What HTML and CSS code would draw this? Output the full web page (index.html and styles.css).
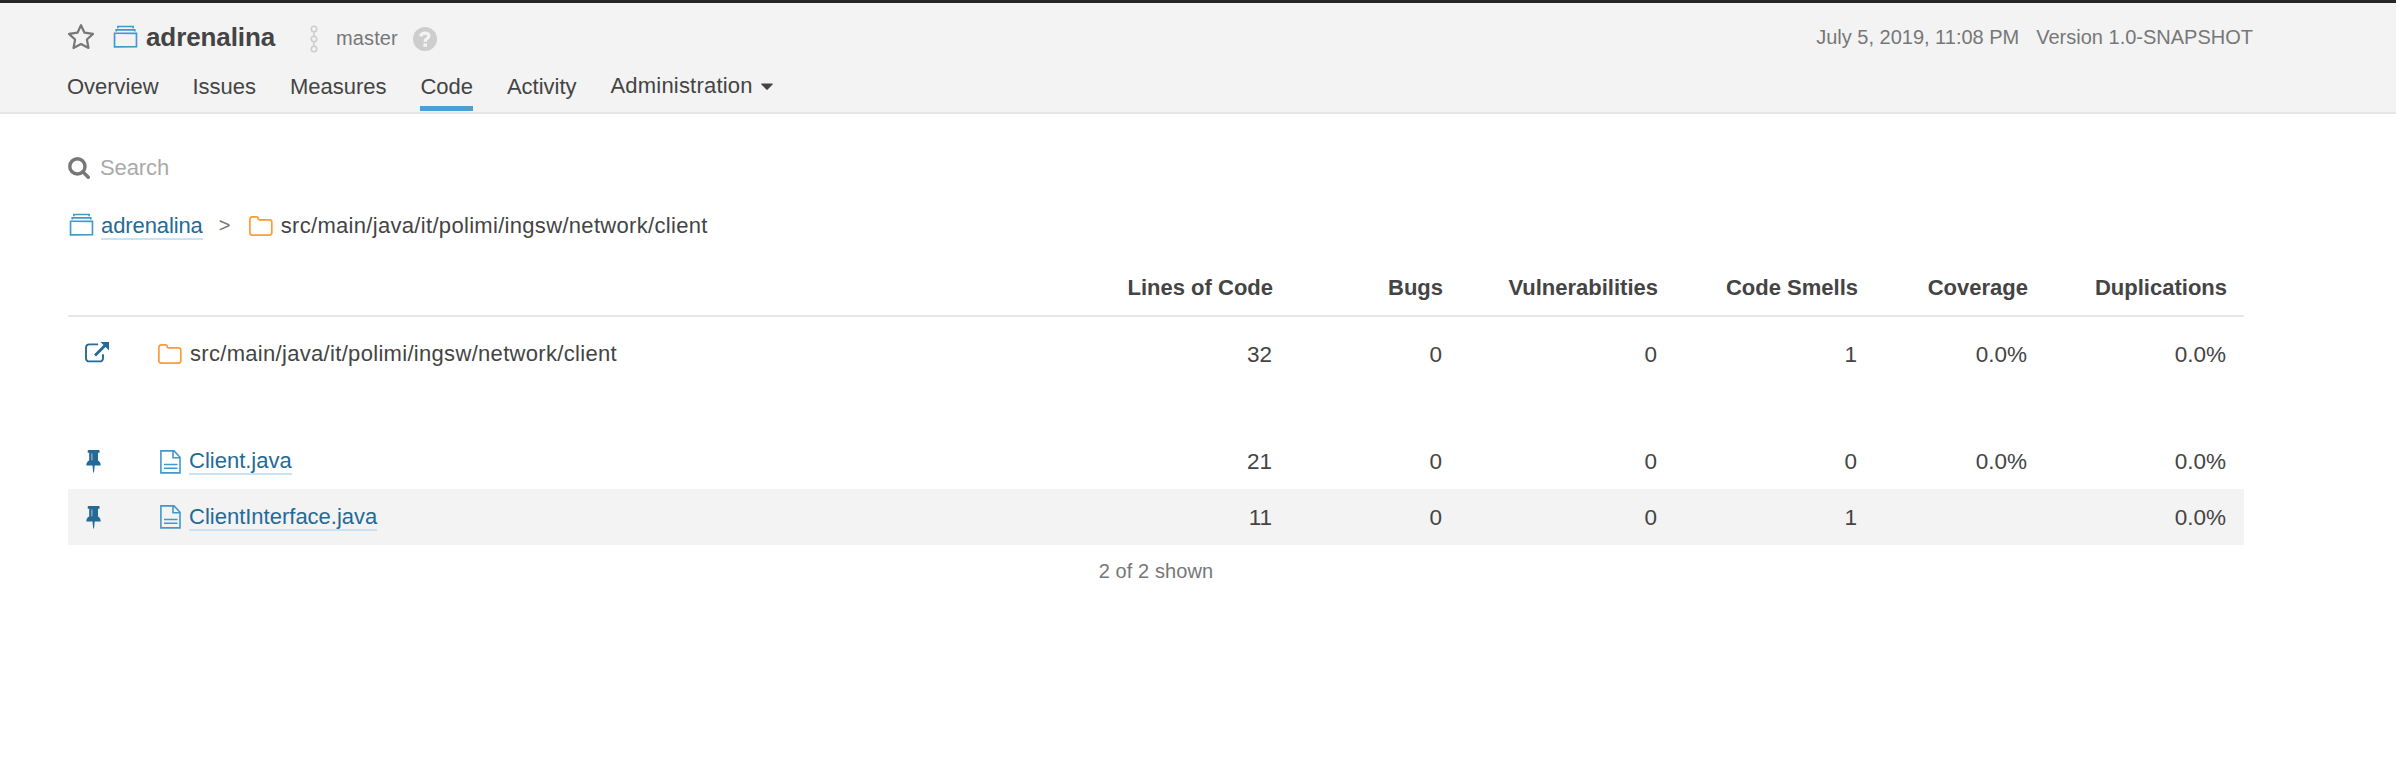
FILE: index.html
```html
<!DOCTYPE html>
<html lang="en">
<head>
<meta charset="utf-8">
<title>adrenalina - Code</title>
<link rel="stylesheet" href="styles.css">
</head>
<body>
<svg class="sprite" aria-hidden="true">
  <symbol id="project" viewBox="0 0 16 16"><path fill="#4398cb" d="M14.985 13.988L1 14.005 1.02 5h13.966v8.988h-.001zM1.998 5.995l.006 7.02L14.022 13 14 6.004l-12.002-.009zM3 4.5V4h9.996l.004.5h1l-.005-1.497-11.98.003L2 4.5h1zm1-2v-.504h8.002L12 2.5h.997l-.001-1.508H3.003L3 2.5h1z"/></symbol>
  <symbol id="folder" viewBox="0 0 24 20"><path fill="none" stroke="#fc9c35" stroke-width="1.7" d="M.9 3.4Q.9.9 3.400.9H7.300Q9.200.9 9.200 2.800 9.200 3.900 10.500 3.900H20.500Q22.800 3.900 22.800 6.200V16.800Q22.800 19.100 20.500 19.100H3.200Q.9 19.100.9 16.800Z"/></symbol>
  <symbol id="file" viewBox="0 0 21 24"><path fill="none" stroke="#4398cb" stroke-width="1.6" d="M.9.9H14L20 7.200V22.900H.9ZM13 .9V7.800H20M4 14.500H17.500M4 18.200H17.500"/></symbol>
  <symbol id="pin" viewBox="0 0 15 23"><path fill="#236a97" d="M2.500 0H12.800Q13.600 0 13.600.9V1.900Q13.600 2.800 12.800 2.800H12V10.600Q14.700 12 14.700 15.600H8.700L8 22.500H7.200L6.500 15.600H.3Q.3 12 3.200 10.600V2.800H2.500Q1.700 2.800 1.700 1.900V.9Q1.700 0 2.500 0Z"/><path stroke="#a9c7da" d="M5.900 3.500V10.300"/></symbol>
</svg>
<header class="header">
  <div class="title-row">
    <svg class="star" viewBox="0 0 28 27"><path d="M14 2.200L17.500 9.700 26 10.900 19.900 16.500 21.500 25 14 21 6.500 25 8.100 16.500 2 10.900 10.500 9.700Z"/></svg>
    <svg class="icon project-icon"><use href="#project"/></svg>
    <h1 class="name">adrenalina</h1>
    <svg class="branch-icon" viewBox="0 0 8 28"><circle cx="4" cy="4" r="2.700"/><circle cx="4" cy="14" r="2.700"/><circle cx="4" cy="24" r="2.700"/><path d="M4 6.700V11.300M4 16.700V21.300"/></svg>
    <span class="branch">master</span>
    <svg class="help" viewBox="0 0 24 24"><circle cx="12" cy="12" r="12" fill="#cdcdcd"/><path fill="none" stroke="#f3f3f3" stroke-width="3.300" d="M7.500 9.400Q8.700 6.100 12 6.100 16 6.200 16 9.100 16 10.700 13.900 11.800 12.200 12.700 12.200 14.800"/><path fill="#f3f3f3" d="M10.400 16.400H14V19.800H10.400Z"/></svg>
    <span class="meta date">July 5, 2019, 11:08 PM</span>
    <span class="meta version">Version 1.0-SNAPSHOT</span>
  </div>
  <nav class="nav">
    <a class="tab">Overview</a>
    <a class="tab">Issues</a>
    <a class="tab">Measures</a>
    <a class="tab active">Code</a>
    <a class="tab">Activity</a>
    <a class="tab admin">Administration<svg class="caret" viewBox="0 0 12 8"><path d="M.9.4H11.100Q12.300.6 11.600 1.500L6.700 6.600Q6 7.200 5.300 6.600L.4 1.500Q-.3.6.9.4Z"/></svg></a>
  </nav>
</header>
<main class="main">
  <div class="search">
    <svg class="search-icon" viewBox="0 0 23 23"><circle cx="9.400" cy="9.400" r="7.600"/><path d="M14.800 14.800L20.300 20.300"/></svg>
    <span>Search</span>
  </div>
  <div class="crumbs">
    <svg class="icon"><use href="#project"/></svg>
    <a class="link">adrenalina</a>
    <span class="sep">&gt;</span>
    <svg class="folder"><use href="#folder"/></svg>
    <span class="path">src/main/java/it/polimi/ingsw/network/client</span>
  </div>
  <section class="table">
    <div class="row head">
      <span></span><span></span>
      <span class="num">Lines of Code</span><span class="num">Bugs</span><span class="num">Vulnerabilities</span><span class="num">Code Smells</span><span class="num">Coverage</span><span class="num">Duplications</span>
    </div>
    <div class="row base">
      <span class="action"><svg class="detach" viewBox="0 0 24 21"><path fill="none" stroke="#236a97" stroke-width="1.900" d="M13 2.400H4.500Q1 2.400 1 5.900V15.900Q1 19.400 4.500 19.400H14.500Q18 19.400 18 15.900V12.300"/><path fill="none" stroke="#236a97" stroke-width="2.800" d="M10 13.500L20.500 3"/><path fill="#236a97" d="M15.500 0H24V8.500Z"/></svg></span>
      <span class="item"><svg class="folder"><use href="#folder"/></svg><span class="path">src/main/java/it/polimi/ingsw/network/client</span></span>
      <span class="num">32</span><span class="num">0</span><span class="num">0</span><span class="num">1</span><span class="num">0.0%</span><span class="num">0.0%</span>
    </div>
    <div class="row">
      <span class="action"><svg class="pin"><use href="#pin"/></svg></span>
      <span class="item"><svg class="file"><use href="#file"/></svg><a class="link">Client.java</a></span>
      <span class="num">21</span><span class="num">0</span><span class="num">0</span><span class="num">0</span><span class="num">0.0%</span><span class="num">0.0%</span>
    </div>
    <div class="row striped">
      <span class="action"><svg class="pin"><use href="#pin"/></svg></span>
      <span class="item"><svg class="file"><use href="#file"/></svg><a class="link">ClientInterface.java</a></span>
      <span class="num">11</span><span class="num">0</span><span class="num">0</span><span class="num">1</span><span class="num"></span><span class="num">0.0%</span>
    </div>
  </section>
  <footer class="shown">2 of 2 shown</footer>
</main>
</body>
</html>
```

FILE: styles.css
```css
* { box-sizing: border-box; }
body {
  margin: 0;
  background: #fff;
  color: #444;
  font: 22px/30px "Liberation Sans", Arial, sans-serif;
}
svg { display: block; flex: none; }
.sprite { position: absolute; width: 0; height: 0; }
.icon { width: 27px; height: 27px; }
.folder { width: 24px; height: 20px; }
.file { width: 21px; height: 24px; }
.pin { width: 15px; height: 23px; }
.detach { width: 24px; height: 21px; }

.header {
  height: 114px;
  border-top: 3px solid #262626;
  border-bottom: 2px solid #e6e6e6;
  background: #f3f3f3;
}
.title-row {
  display: flex;
  align-items: center;
  height: 68px;
  padding: 0 143px 0 67px;
}
.star { width: 28px; height: 27px; margin-bottom: 2px; fill: none; stroke: #777; stroke-width: 2.2; stroke-linejoin: round; }
.project-icon { margin-left: 17px; }
.name { margin: 0 0 0 7px; font-size: 26px; letter-spacing: -0.1px; }
.branch-icon { width: 8px; height: 28px; margin: 3px 0 0 35px; fill: none; stroke: #cdcdcd; stroke-width: 1.6; }
.branch { margin: 2px 0 0 18px; font-size: 20px; letter-spacing: 0.1px; color: #777; }
.help { width: 24px; height: 24px; margin: 3px 0 0 15px; }
.meta { font-size: 20px; color: #777; white-space: nowrap; }
.date { margin-left: auto; }
.version { margin-left: 17px; }

.nav { display: flex; gap: 34px; padding-left: 67px; }
.tab { height: 40px; padding-bottom: 4px; border-bottom: 5px solid transparent; line-height: 31px; letter-spacing: -0.02px; }
.active { border-color: #4b9fd5; }
.admin { display: flex; align-items: center; height: 38px; line-height: 29px; letter-spacing: 0.2px; }
.caret { width: 12px; height: 8px; margin: 3px 0 0 8px; fill: #444; }

.main { width: 2244px; padding: 34px 0 0 68px; }
.search { display: flex; align-items: center; gap: 9px; height: 40px; color: #aaa; letter-spacing: -0.1px; }
.search-icon { width: 23px; height: 23px; fill: none; stroke: #777; stroke-width: 3.4; stroke-linecap: round; }
.crumbs { display: flex; align-items: center; height: 40px; margin-top: 17px; }
.crumbs .link { margin: 3px 0 0 6px; letter-spacing: -0.1px; }
.crumbs .folder { margin: 1px 8px 0 0; }
.crumbs .path { padding-top: 1px; }
.path { letter-spacing: 0.31px; }
.sep { width: 46px; padding-left: 16px; font-size: 20px; color: #777; }
.link { color: #236a97; border-bottom: 2px solid #cae3f2; line-height: 25px; }

.table { margin-top: 15px; }
.row {
  display: grid;
  grid-template-columns: 90px 1fr 200px 170px 215px 200px 170px 199px;
  align-items: center;
  height: 56px;
}
.head { height: 57px; padding-top: 1px; border-bottom: 2px solid #e6e6e6; font-weight: bold; }
.base { margin: 9px 0 51px; }
.striped { background: #f3f3f3; }
.action { padding-left: 17px; }
.action .pin { margin-left: 1px; }
.base .action { padding-bottom: 3px; }
.item { display: flex; align-items: center; gap: 8px; margin-bottom: 1px; }
.item .file { margin: 2px 0 0 2px; }
.item .link { margin-top: 2px; }
.striped .item { margin-bottom: 2px; }
.num { padding-right: 17px; text-align: right; }
.row:not(.head) .num { padding: 2px 18px 0 0; font-size: 22.5px; }
.shown { padding-top: 11px; font-size: 20px; letter-spacing: 0.1px; color: #777; text-align: center; }
```
